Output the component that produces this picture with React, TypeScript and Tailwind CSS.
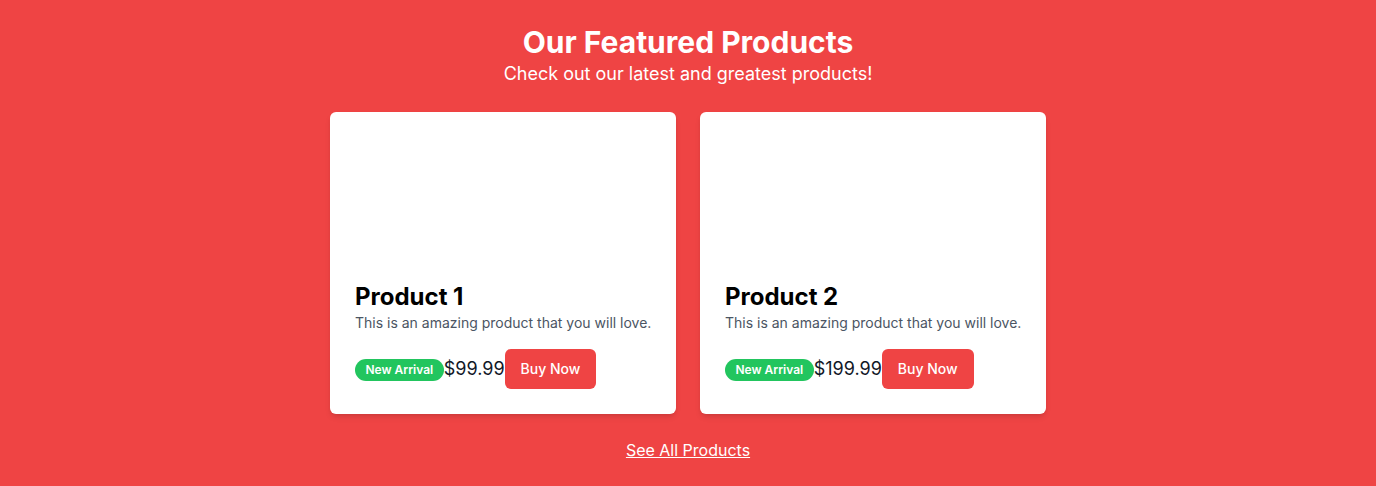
const products = [
  { id: 1, name: "Product 1", price: "$99.99" },
  { id: 2, name: "Product 2", price: "$199.99" },
];

export default function App() {
  return (
    <div
      className="min-h-[486px] bg-[#ef4444] py-6 text-center"
      style={{ fontFamily: "Inter, 'Noto Sans', sans-serif" }}
    >
      <h2 className="text-3xl font-bold text-white">Our Featured Products</h2>
      <p className="text-lg text-white">Check out our latest and greatest products!</p>

      <div className="mt-6 flex justify-center gap-6">
        {products.map((p) => (
          <div key={p.id} className="w-[346px] overflow-hidden rounded-md bg-white text-left shadow-md">
            <div className="h-[145px] w-full" />
            <div className="pt-6 pr-6 pb-[25px] pl-[25px]">
              <h3 className="text-2xl font-bold text-black">{p.name}</h3>
              <p className="whitespace-nowrap text-sm text-[#4b5563]">
                This is an amazing product that you will love.
              </p>
              <div className="mt-4 flex items-center">
                <span className="mt-px rounded-full bg-[#22c55e] px-[10.5px] py-[3px] text-xs font-semibold text-white">
                  New Arrival
                </span>
                <span className="text-lg text-[#111827]">{p.price}</span>
                <button className="rounded-md bg-[#ef4444] px-4 py-2.5 text-sm font-medium text-white">
                  Buy Now
                </button>
              </div>
            </div>
          </div>
        ))}
      </div>

      <div className="mt-6">
        <a href="#" className="text-base text-white underline">
          See All Products
        </a>
      </div>
    </div>
  );
}
